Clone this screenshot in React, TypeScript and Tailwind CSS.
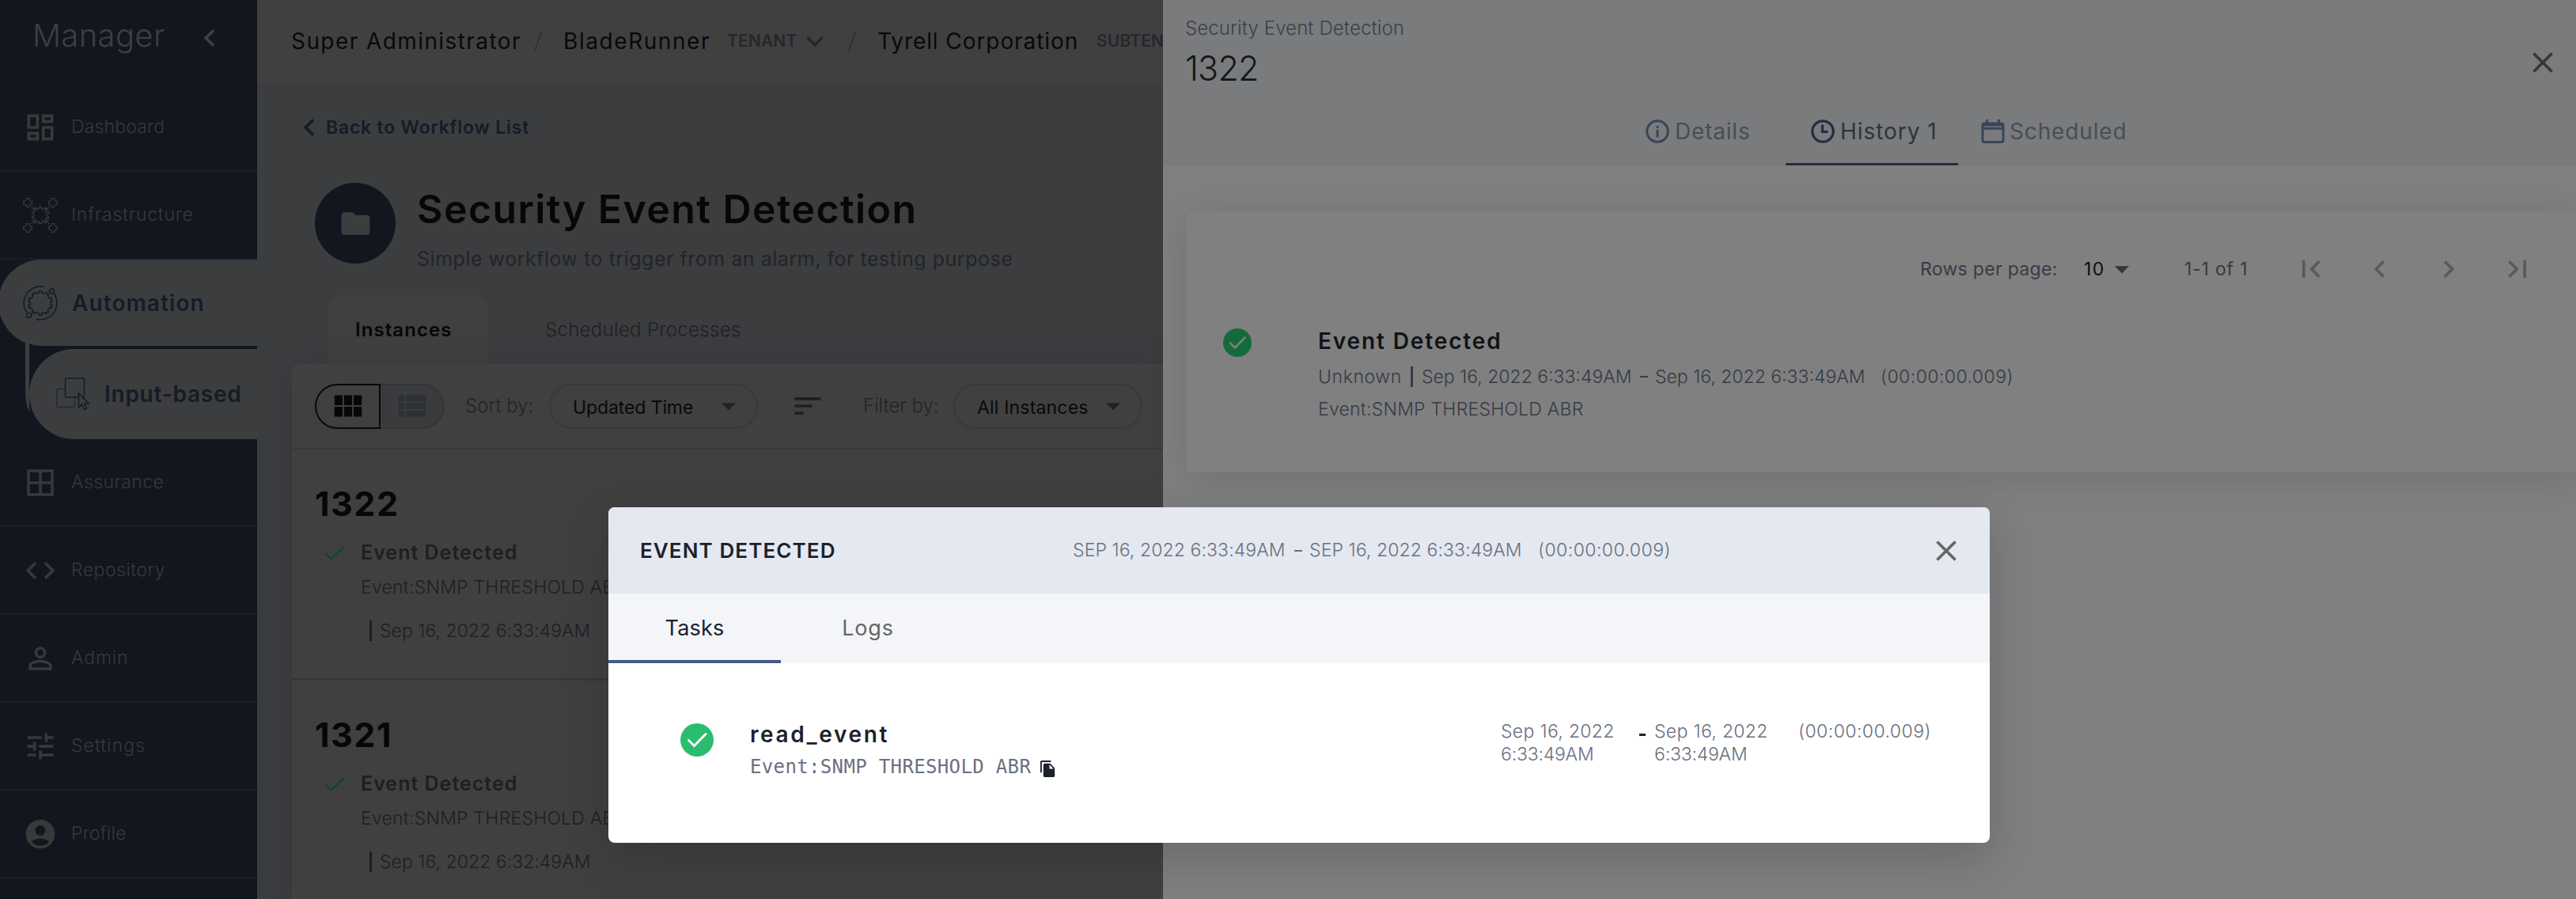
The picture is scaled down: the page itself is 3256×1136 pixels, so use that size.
import React from "react";
import {
  MdOutlineDashboard, MdCode, MdPersonOutline, MdTune, MdAccountCircle, MdChevronLeft, MdChevronRight,
  MdFolder, MdViewModule, MdViewList, MdSort, MdArrowDropDown, MdClose, MdFirstPage, MdLastPage,
  MdFileCopy, MdKeyboardArrowDown,
} from "react-icons/md";

function T({ c = "", children }: { c?: string; children: string }) {
  return <span className={"block shrink-0 whitespace-nowrap " + c}>{children}</span>;
}

/* Outline of a cog with n teeth, r = root radius, R = tip radius */
function gear(cx: number, cy: number, r: number, R: number, n: number) {
  let d = "";
  for (let i = 0; i < n; i++) {
    const a = (i / n) * Math.PI * 2 - Math.PI / 2;
    const p = Math.PI / n;
    const pts: [number, number][] = [[-0.5, r], [-0.42, R], [0.42, R], [0.5, r]];
    pts.forEach(([f, q], j) => {
      d += (i === 0 && j === 0 ? "M" : "L") + (cx + q * Math.cos(a + f * p)).toFixed(2) + " " + (cy + q * Math.sin(a + f * p)).toFixed(2);
    });
  }
  return d + "Z";
}

const InfraIcon = () => (
  <svg viewBox="0 0 44 44" className="size-11" fill="none" stroke="currentColor" strokeWidth="1.3">
    <path d={gear(22, 22, 8.4, 10.8, 10)} />
    {[[6, 6], [38, 6], [6, 38], [38, 38]].map(([x, y]) => <path key={x + "-" + y} d={gear(x, y, 4.2, 5.6, 4)} />)}
    <path d="M14.5 14.500l-4-4M29.500 14.500l4-4M14.500 29.500l-4 4M29.500 29.500l4 4" strokeWidth="1.6" strokeDasharray="2.200 1" />
    <path d="M14.500 11.800v2.700h-2.700M29.500 11.800v2.700h2.700M14.500 32.200v-2.700h-2.700M29.500 32.200v-2.700h2.700" />
  </svg>
);
const AutomationIcon = () => (
  <svg viewBox="0 0 44 44" className="size-11" fill="none" stroke="currentColor" strokeWidth="1.6">
    <path d={gear(22, 22, 13, 15.200, 10)} />
    <path d="M27 1.600A21 21 0 0 0 4.800 34M17 42.400A21 21 0 0 0 39.200 10" />
    <circle cx="36.500" cy="7" r="3" /><circle cx="7.500" cy="37.500" r="3" />
  </svg>
);
const InputIcon = () => (
  <svg viewBox="0 0 44 44" className="size-11" fill="none" stroke="currentColor" strokeWidth="1.5">
    <path d="M11 15.500H2.500a1.500 1.500 0 0 0-1.500 1.500v20a1.500 1.500 0 0 0 1.500 1.500H22a1.500 1.500 0 0 0 1.500-1.500V27" strokeDasharray="1.800 1.200" />
    <rect x="11.500" y="2" width="24" height="24" rx="1.500" />
    <path d="M28.500 21v18l4-4 3.200 6.500 3-1.500-3.200-6h6z" fill="#3c3d3f" />
  </svg>
);
const WindowIcon = () => (
  <svg viewBox="0 0 44 44" className="size-11" fill="none" stroke="currentColor" strokeWidth="3.400">
    <path d="M7 7h30v30H7zM22 7v30M7 22h30" />
  </svg>
);
const InfoIcon = () => (
  <svg viewBox="0 0 30 30" className="size-[30px]" fill="none" stroke="currentColor" strokeWidth="3">
    <circle cx="15" cy="15" r="13.300" /><path d="M15 8v3M15 13v9.500" />
  </svg>
);
const ClockIcon = () => (
  <svg viewBox="0 0 30 30" className="size-[30px]" fill="none" stroke="currentColor" strokeWidth="3.200">
    <circle cx="15" cy="15" r="13.200" /><path d="M14.500 6.500v9h7" />
  </svg>
);
const CalendarIcon = () => (
  <svg viewBox="0 0 30 30" className="size-[30px]" fill="none" stroke="currentColor" strokeWidth="3">
    <rect x="2" y="5" width="26" height="23.500" rx="2.500" /><path d="M2 11.300h26" /><path d="M2 7h26" /><path d="M7.500 0v5M22.500 0v5" />
  </svg>
);
const CheckCircle = ({ c }: { c: string }) => (
  <svg viewBox="0 0 42 42" className={c}><circle cx="21" cy="21" r="21" fill="currentColor" />
    <path d="M10.500 21.500l7 7L32 13.500" fill="none" className="stroke-(--tick)" strokeWidth="2.800" strokeLinecap="round" /></svg>
);

function NavItem({ icon, label, c }: { icon: React.ReactNode; label: string; c: string }) {
  return (
    <div className="flex h-[111px] shrink-0 items-center gap-[17px] border-b-2 border-[#191d27] pl-[29px] text-[#38393b]">
      {icon}<T c={"text-[23px] font-light " + c}>{label}</T>
    </div>
  );
}

function Sidebar() {
  return (
    <aside className="flex h-full w-[325px] shrink-0 flex-col overflow-hidden bg-[#12161e]">
      <div className="flex h-[106px] shrink-0 items-center pb-[17px] pl-[41px]">
        <T c="w-[202px] text-[40px] font-light tracking-[0.35px] text-[#3f3f3f]">Manager</T>
        <MdChevronLeft className="mt-[6px] size-11 text-[#404040]" />
      </div>
      <NavItem icon={<MdOutlineDashboard className="size-11" />} label="Dashboard" c="tracking-[0.17px]" />
      <NavItem icon={<InfraIcon />} label="Infrastructure" c="tracking-[0.8px]" />
      <div className="relative z-10 -ml-0.5 flex h-[109px] shrink-0 items-center gap-[18px] rounded-l-full bg-[#3c3d3f] pl-[31px] text-[#151b27]">
        <AutomationIcon /><T c="text-[28px] font-semibold tracking-[1.09px]">Automation</T>
      </div>
      <div className="-mt-[10px] ml-8 h-[128px] shrink-0 rounded-bl-[58px] bg-[#3c3d3f] pl-[5px] text-[#151b27]">
        <div className="bg-[#12161e] pt-[14px]">
          <div className="flex h-[114px] items-center gap-[17px] rounded-l-[57px] bg-[#3c3d3f] pl-[34px]">
            <InputIcon /><T c="text-[28px] font-semibold tracking-[0.75px]">Input-based</T>
          </div>
        </div>
      </div>
      <NavItem icon={<WindowIcon />} label="Assurance" c="tracking-[0.42px]" />
      <NavItem icon={<MdCode className="size-11" />} label="Repository" c="tracking-[0.49px]" />
      <NavItem icon={<MdPersonOutline className="size-11" />} label="Admin" c="tracking-[0.85px]" />
      <NavItem icon={<MdTune className="size-11" />} label="Settings" c="tracking-[1.05px]" />
      <NavItem icon={<MdAccountCircle className="size-11" />} label="Profile" c="tracking-[0.23px]" />
    </aside>
  );
}

const Slash = ({ c }: { c: string }) => (
  <svg viewBox="0 0 12 26" className={"h-[26px] w-3 shrink-0 " + c}><path d="M10 1L2 25" stroke="#2d2e2f" strokeWidth="1.600" /></svg>
);

function Instance({ id, time }: { id: string; time: string }) {
  return (
    <div className="h-[292px] border-b-[3px] border-[#363738] pl-[29px] pt-[46px]">
      <div className="flex h-11 items-center text-[43px] font-bold text-[#060708]"><T c="tracking-[1.5px]">{id}</T></div>
      <div className="mt-[21px] flex h-10 items-center text-[#1d1f23]">
        <svg viewBox="0 0 26 18" className="ml-3 mr-5 h-[18px] w-[26px]" fill="none" stroke="#10472a" strokeWidth="2.500"><path d="M1 9l7.500 7.500L25 1" /></svg>
        <T c="text-[25px] font-semibold tracking-[1px]">Event Detected</T>
      </div>
      <div className="mt-[8px] flex h-[30px] items-center pl-[58px] text-[23px] font-light text-[#1d1f23]"><T c="tracking-[0.24px]">Event:SNMP THRESHOLD ABR</T></div>
      <div className="mt-[25px] flex h-[30px] items-center gap-[10px] pl-[69px] text-[23px] font-light text-[#1d1f23]">
        <span className="h-[26px] w-[3px] bg-[#1d1f23]" /><T c="tracking-[0.04px]">{time}</T>
      </div>
    </div>
  );
}

function Workspace() {
  return (
    <main className="flex h-full w-[1145px] shrink-0 flex-col overflow-hidden bg-[#3c3d3f]">
      <header className="flex h-[106px] shrink-0 items-center bg-[#404040] pb-0.5 pl-[43px] text-[28px] text-[#08090a]">
        <T c="w-[306px] tracking-[1.42px]">Super Administrator</T><Slash c="" />
        <T c="ml-[26px] w-[207px] tracking-[1.57px]">BladeRunner</T>
        <T c="w-[89px] text-[21px] font-semibold tracking-[0.14px] text-[#25272c]">TENANT</T>
        <MdKeyboardArrowDown className="size-11 shrink-0 text-[#25272c]" />
        <Slash c="ml-[19px]" />
        <T c="ml-[26px] w-[277px] tracking-[0.92px]">Tyrell Corporation</T>
        <T c="text-[21px] font-semibold tracking-[0.14px] text-[#25272c]">SUBTENANT</T>
      </header>
      <div className="flex h-[110px] shrink-0 items-center pl-11 text-[23px] font-semibold text-[#151b27]">
        <MdChevronLeft className="size-11" /><T c="-ml-px tracking-[0.78px]">Back to Workflow List</T>
      </div>
      <div className="flex h-[157px] shrink-0 gap-[27px] pl-[73px] pt-[15px]">
        <div className="flex size-[102px] items-center justify-center rounded-full bg-[#12161e]"><MdFolder className="size-[43px] text-[#3c3d3f]" /></div>
        <div>
          <div className="flex h-[66px] items-center text-[50px] font-semibold text-[#060708]"><T c="tracking-[1.42px]">Security Event Detection</T></div>
          <div className="flex h-[62px] items-center text-[25px] text-[#222427]"><T c="tracking-[0.52px]">Simple workflow to trigger from an alarm, for testing purpose</T></div>
        </div>
      </div>
      <div className="flex h-[87px] shrink-0 items-center pl-[90px] text-[24px]">
        <div className="flex h-full w-[202px] items-center rounded-t-2xl bg-[#404040] pl-[34px] font-semibold text-[#060708]"><T c="tracking-[1.06px]">Instances</T></div>
        <T c="ml-[72px] font-light tracking-[0.3px] text-[#1f2124]">Scheduled Processes</T>
      </div>
      <section className="ml-11 flex-1 rounded-tl-lg bg-[#404040] shadow-[0_4px_48px_rgba(24,32,44,0.18)]">
        <div className="flex h-[108px] items-center border-b-2 border-[#38393a] pl-[29px] text-[24px]">
          <div className="flex h-[57px] w-[83px] items-center justify-center rounded-l-full border-2 border-[#08090a] text-[#060708]"><MdViewModule className="size-[46px]" /></div>
          <div className="flex h-[57px] w-[81px] items-center justify-center rounded-r-full border-2 border-l-0 border-[#333538] bg-[#3a3b3c] text-[#2c2f35]"><MdViewList className="size-[46px]" /></div>
          <T c="ml-[26px] w-[106px] font-light text-[#222427]">Sort by:</T>
          <div className="flex h-[57px] w-[264px] items-center justify-between rounded-full border-2 border-[#383939] pl-7 pr-[13px] text-[23px] text-[#08090a]"><T c="mt-1 tracking-[-0.1px]">Updated Time</T><MdArrowDropDown className="size-11 text-[#222]" /></div>
          <MdSort className="ml-[41px] size-11 text-[#1d1f20]" />
          <T c="ml-12 w-[114px] font-light tracking-[-0.07px] text-[#222427]">Filter by:</T>
          <div className="flex h-[57px] w-[239px] items-center justify-between rounded-full border-2 border-[#383939] pl-7 pr-[13px] text-[23px] text-[#08090a]"><T c="mt-1 tracking-[0.18px]">All Instances</T><MdArrowDropDown className="size-11 text-[#222]" /></div>
        </div>
        <Instance id="1322" time="Sep 16, 2022 6:33:49AM" />
        <Instance id="1321" time="Sep 16, 2022 6:32:49AM" />
      </section>
    </main>
  );
}

function Drawer() {
  return (
    <aside className="absolute right-0 top-0 flex h-full w-[1786px] flex-col bg-[#808080]">
      <div className="flex h-[209px] shrink-0 flex-col bg-[#797b7d]">
        <div className="flex items-start justify-between pl-7 pr-5">
          <div>
            <div className="mt-[20px] flex h-8 items-center text-[24px] font-light text-[#3c4049]"><T c="tracking-[0.1px]">Security Event Detection</T></div>
            <div className="mt-[10px] flex h-12 items-center text-[43px] font-light text-[#131619]"><T c="tracking-[-0.8px]">1322</T></div>
          </div>
          <MdClose className="mt-[57px] size-11 text-[#373737]" />
        </div>
        <div className="mt-auto flex h-[88px] text-[28px] text-[#484d57]">
          <div className="ml-[567px] flex w-[220px] items-center gap-[7px] pb-[3px] pl-[43px] pt-1"><span className="text-[#39455a]"><InfoIcon /></span><T c="tracking-[0.8px]">Details</T></div>
          <div className="flex w-[218px] items-center gap-[7px] border-b-[3px] border-[#252c42] pl-[32px] pt-1 text-[#2e333d]"><span className="text-[#252c42]"><ClockIcon /></span><T c="tracking-[0.95px]">History 1</T></div>
          <div className="flex w-[241px] items-center gap-[6px] pb-[3px] pl-[29px] pt-1"><span className="text-[#39455a]"><CalendarIcon /></span><T c="tracking-[0.85px]">Scheduled</T></div>
        </div>
      </div>
      <div className="ml-[29px] mt-[58px] h-[330px] rounded-l-lg bg-[#808080] shadow-[0_8px_44px_rgba(50,60,70,0.22)]">
        <div className="flex h-[146px] items-center justify-end pr-[52px] text-[23px] text-[#363b45]">
          <T c="w-[207px] tracking-[0.31px]">Rows per page:</T>
          <T c="w-[26px] tracking-[1.5px] text-[#0d0e10]">10</T>
          <MdArrowDropDown className="size-11 text-[#373737]" />
          <T c="ml-[57px] w-[138px] tracking-[0.8px]">1-1 of 1</T>
          <div className="flex gap-[43px] text-[#5a5a5a]">
            <MdFirstPage className="size-11" /><MdChevronLeft className="size-11" /><MdChevronRight className="size-11" /><MdLastPage className="size-11" />
          </div>
        </div>
        <div className="flex pl-[47px] [--tick:#808080]">
          <CheckCircle c="mt-[2px] size-9 text-[#156a3c]" />
          <div className="ml-[84px] text-[23px] font-light text-[#363b45]">
            <div className="flex h-9 items-center text-[28px] font-semibold text-[#101317]"><T c="tracking-[1.87px]">Event Detected</T></div>
            <div className="mt-[10px] flex h-[34px] items-center">
              <T c="w-[117px] tracking-[0.6px]">Unknown</T><span className="mr-[11px] h-[26px] w-[3px] bg-[#363b45]" />
              <T c="w-[276px]">Sep 16, 2022 6:33:49AM</T><span className="mr-[9px] h-0.5 w-[10px] bg-[#363b45]" />
              <T c="w-[285px]">Sep 16, 2022 6:33:49AM</T><T c="tracking-[0.43px]">(00:00:00.009)</T>
            </div>
            <div className="mt-[7px] flex h-[34px] items-center"><T c="tracking-[0.24px]">Event:SNMP THRESHOLD ABR</T></div>
          </div>
        </div>
      </div>
    </aside>
  );
}

function Modal() {
  return (
    <div className="absolute left-[769px] top-[641px] flex h-[424px] w-[1746px] flex-col overflow-hidden rounded-lg bg-white shadow-[0_20px_60px_rgba(20,24,32,0.22)]">
      <div className="flex h-[109px] shrink-0 items-center bg-[#e4e8f0] pl-[40px] pr-[33px] text-[23px] font-light text-[#6a7081]">
        <T c="w-[547px] text-[26px] font-semibold tracking-[1.1px] text-[#1c212b]">EVENT DETECTED</T>
        <T c="w-[280px] tracking-[0.1px]">SEP 16, 2022 6:33:49AM</T><span className="mr-[9px] h-0.5 w-[10px] bg-[#6a7081]" />
        <T c="w-[289px] tracking-[0.1px]">SEP 16, 2022 6:33:49AM</T><T c="tracking-[0.43px]">(00:00:00.009)</T>
        <MdClose className="ml-auto size-11 text-[#666]" />
      </div>
      <div className="flex h-[88px] shrink-0 bg-[#f4f5f9] text-[27px]">
        <div className="flex w-[218px] items-center justify-center border-b-4 border-[#485a88] pt-1 text-[#1c212b]"><T c="tracking-[0.18px]">Tasks</T></div>
        <div className="flex w-[218px] items-center justify-center pl-[2px] text-[#666]"><T c="tracking-[0.8px]">Logs</T></div>
      </div>
      <div className="flex flex-1 pl-[91px] pt-[72px] text-[23px] font-light text-[#6a7081] [--tick:#fff]">
        <CheckCircle c="mt-1 size-[42px] text-[#2bbd6f]" />
        <div className="ml-[46px]">
          <div className="flex h-9 items-center text-[28px] font-semibold text-[#1c212b]"><T c="tracking-[2.6px]">read_event</T></div>
          <div className="mt-[5px] flex h-9 items-center font-['DejaVu_Sans_Mono',monospace] text-[24px] font-normal"><T c="tracking-[0.35px]">Event:SNMP THRESHOLD ABR</T><MdFileCopy className="ml-[10px] mt-1 size-[23px] text-[#1c212b]" /></div>
        </div>
        <div className="ml-auto flex pr-[75px] leading-[29px]">
          <div className="w-[175px]"><T c="tracking-[0.33px]">Sep 16, 2022</T><T c="tracking-[-0.2px]">6:33:49AM</T></div>
          <span className="mr-[11px] mt-[17px] h-[3px] w-2 bg-[#1c212b]" />
          <div className="w-[182px]"><T c="tracking-[0.33px]">Sep 16, 2022</T><T c="tracking-[-0.2px]">6:33:49AM</T></div>
          <T c="w-[167px] tracking-[0.43px]">(00:00:00.009)</T>
        </div>
      </div>
    </div>
  );
}

export default function App() {
  return (
    <div className="relative flex h-[1136px] w-[3256px] overflow-hidden bg-[#3c3d3f] font-['Inter',sans-serif]">
      <Sidebar /><Workspace /><Drawer /><Modal />
    </div>
  );
}
